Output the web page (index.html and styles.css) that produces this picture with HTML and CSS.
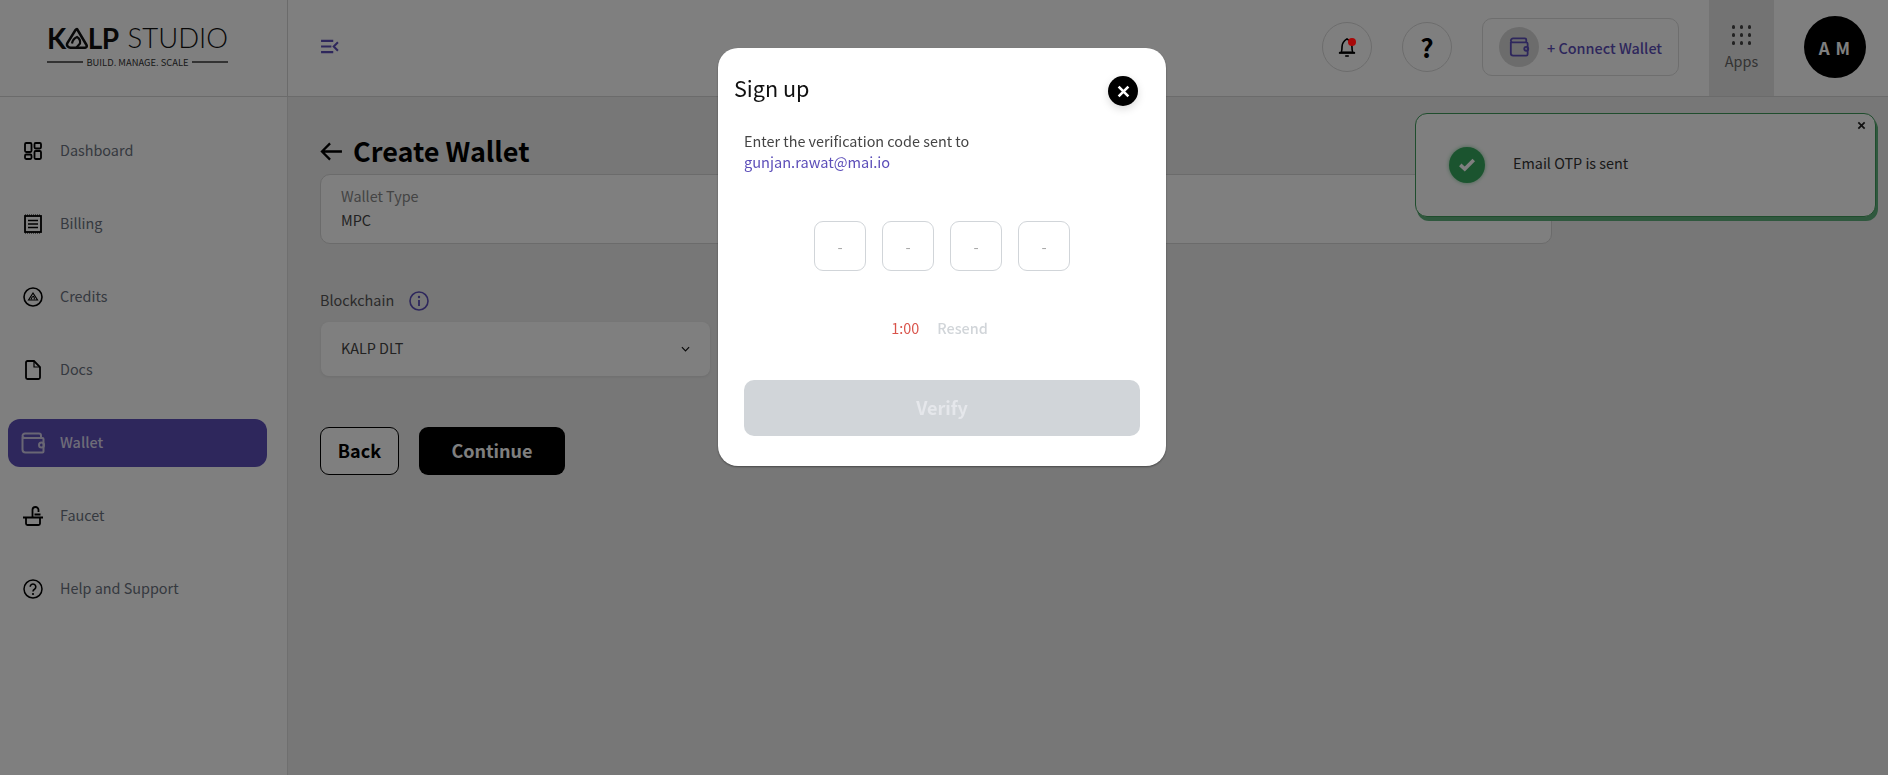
FILE: index.html
```html
<!DOCTYPE html>
<html lang="en">
<head>
<meta charset="utf-8">
<title>Kalp Studio</title>
<link rel="stylesheet" href="styles.css">
</head>
<body>
<div class="app">
  <header class="topbar">
    <div class="brand">
      <div class="logo">
        <div class="logo-word"><b>K</b><svg class="logo-a" viewBox="0 0 24 22"><path d="M12 2 21.500 18c.8 1.500-.2 2.800-2 2.800H6c-3 0-5-2.300-3.500-5L10.500 3c.6-1 1-1 1.500-1Z" fill="none" stroke="#111" stroke-width="2.500" stroke-linejoin="round"/><path d="M7 16.500c.5-3 2.500-5.500 5-6.500 2.500 1.500 3.500 4 3 6.500l-3.500 4" fill="none" stroke="#111" stroke-width="2.200"/></svg><b>LP</b><span class="logo-thin">STUDIO</span></div>
        <div class="logo-tag"><i></i><span>BUILD. MANAGE. SCALE</span><i></i></div>
      </div>
    </div>
    <div class="bar">
      <svg class="menu-ico" viewBox="0 0 20 16"><path d="M1 2h13M1 8h11M1 14h13M19 3.500 14.500 8l4.500 4.500" fill="none" stroke="#5c4eb9" stroke-width="2.200"/></svg>
      <div class="bar-right">
        <div class="round-btn"><svg class="bell" viewBox="0 0 20 24"><path d="M3.500 18c1-1.500 1-3 1-6.500C4.500 7.500 7 5 10 3c3 2 5.500 4.500 5.500 8.500 0 3.500 0 5 1 6.500Z" fill="none" stroke="#000" stroke-width="1.800"/><path d="M1 18.500h18" stroke="#000" stroke-width="2.200"/><path d="M8 22h4" stroke="#000" stroke-width="1.800"/></svg><i class="dot"></i></div>
        <div class="round-btn help">?</div>
        <div class="connect">
          <span class="connect-ico"><svg class="wallet-ico" viewBox="0 0 24 22"><path d="M3 5.500V18a2.500 2.500 0 0 0 2.500 2.500H20a1.500 1.500 0 0 0 1.500-1.500V7.500A1.500 1.500 0 0 0 20 6H5A2.200 2.200 0 0 1 3 4a2.500 2.500 0 0 1 2.500-2.500H18.500A1.500 1.500 0 0 1 20 3v3" fill="none" stroke="#5c4eb9" stroke-width="2"/><circle cx="20" cy="13" r="2.200" fill="none" stroke="#5c4eb9" stroke-width="2"/></svg></span>
          <span>+ Connect Wallet</span>
        </div>
        <div class="apps">
          <div class="dots"><i></i><i></i><i></i><i></i><i></i><i></i><i></i><i></i><i></i></div>
          <span>Apps</span>
        </div>
        <div class="avatar">A M</div>
      </div>
    </div>
  </header>
  <div class="body">
    <nav class="side">
      <a class="nav"><svg class="ni" viewBox="-1 -1 20 20"><g fill="none" stroke="#000" stroke-width="1.800"><rect x="1" y="1" width="6.500" height="9" rx="1.200"/><rect x="10.500" y="1" width="6.500" height="5.500" rx="1.200"/><rect x="1" y="12.500" width="6.500" height="4.500" rx="1.200"/><rect x="10.500" y="9" width="6.500" height="8" rx="1.200"/></g></svg><span>Dashboard</span></a>
      <a class="nav"><svg class="ni" viewBox="-1 0 20 20"><rect x="1" y="2" width="16" height="16" fill="none" stroke="#000" stroke-width="1.800"/><path d="M4 6.500h10M4 10h10M4 13.500h10" stroke="#000" stroke-width="1.600"/><path d="M1 1h16M1 19h16" stroke="#000" stroke-dasharray="1 1"/></svg><span>Billing</span></a>
      <a class="nav"><svg class="ni" viewBox="0 0 20 20"><circle cx="10" cy="10" r="9" fill="none" stroke="#000" stroke-width="1.600"/><path d="M5.500 13 10 6l4.500 7Z" fill="none" stroke="#000" stroke-width="1.200"/><path d="M8 12.500c.6-2 1.500-3 2.500-3.200.8.800 1 2 .8 3" fill="none" stroke="#000" stroke-width="1.100"/></svg><span>Credits</span></a>
      <a class="nav"><svg class="ni" viewBox="0 0 20 20"><path d="M3 2.500v15a1.500 1.500 0 0 0 1.500 1.500h11a1.500 1.500 0 0 0 1.500-1.500V7l-6-6H4.500A1.500 1.500 0 0 0 3 2.500Z" fill="none" stroke="#000" stroke-width="1.800"/><path d="M11 1v6h6" fill="none" stroke="#000" stroke-width="1.200"/></svg><span>Docs</span></a>
      <a class="nav active"><svg class="ni wide" viewBox="0 0 24 22"><path d="M1.500 5v12.500a3 3 0 0 0 3 3h17a1 1 0 0 0 1-1V7a1 1 0 0 0-1-1H4A2.500 2.500 0 0 1 1.500 4 2.500 2.500 0 0 1 4 1.500h14A2 2 0 0 1 20 3.500V6" fill="none" stroke="#d2cde8" stroke-width="2"/><circle cx="20.500" cy="13" r="2.500" fill="none" stroke="#d2cde8" stroke-width="2"/></svg><span>Wallet</span></a>
      <a class="nav"><svg class="ni" viewBox="0 0 20 20"><path d="M0 11.500h20M3 11.500v6a1.500 1.500 0 0 0 1.500 1.500h11a1.500 1.500 0 0 0 1.500-1.500v-6M9.500 11.500V4a3 3 0 0 1 6 0v2M11.500 8.500h6" fill="none" stroke="#000" stroke-width="1.800"/></svg><span>Faucet</span></a>
      <a class="nav"><svg class="ni" viewBox="0 0 20 20"><circle cx="10" cy="10" r="9" fill="none" stroke="#000" stroke-width="1.500"/><path d="M7.200 7.800A2.800 2.800 0 1 1 11.500 10.200c-1 .6-1.500 1.100-1.500 2.200" fill="none" stroke="#000" stroke-width="1.600"/><circle cx="10" cy="15" r="1.100"/></svg><span>Help and Support</span></a>
    </nav>
    <main class="main">
      <div class="title-row">
        <svg class="back-arrow" viewBox="0 0 24 20"><path d="M23 10H2M10.500 1.500 2 10l8.500 8.500" fill="none" stroke="#000" stroke-width="2.400"/></svg>
        <h1>Create Wallet</h1>
      </div>
      <div class="type-box">
        <div class="type-label">Wallet Type</div>
        <div class="type-value">MPC</div>
      </div>
      <div class="chain-label">
        <span>Blockchain</span>
        <svg class="info" viewBox="0 0 20 20"><circle cx="10" cy="10" r="9" fill="none" stroke="#5c4eb9" stroke-width="1.600"/><path d="M10 9v6" stroke="#5c4eb9" stroke-width="1.800"/><circle cx="10" cy="6" r="1.200" fill="#5c4eb9"/></svg>
      </div>
      <div class="select">
        <span>KALP DLT</span>
        <svg class="chev" viewBox="0 0 10 6"><path d="M1 1l4 4 4-4" fill="none" stroke="#111" stroke-width="1.300"/></svg>
      </div>
      <div class="actions">
        <button class="btn ghost">Back</button>
        <button class="btn solid">Continue</button>
      </div>
    </main>
  </div>
  <div class="toast">
    <span class="toast-ok"><svg viewBox="0 0 20 16"><path d="M2.500 8.500 7.500 13 17.500 3" fill="none" stroke="#fff" stroke-width="4"/></svg></span>
    <span class="toast-text">Email OTP is sent</span>
    <svg class="toast-x" viewBox="0 0 10 10"><path d="M1.500 1.500l7 7M8.500 1.500l-7 7" stroke="#222" stroke-width="1.900"/></svg>
  </div>
</div>
<div class="overlay">
  <section class="modal">
    <div class="modal-head">
      <h2>Sign up</h2>
      <span class="modal-x"><svg viewBox="0 0 12 12"><path d="M1.500 1.500l9 9M10.500 1.500l-9 9" stroke="#fff" stroke-width="2.400"/></svg></span>
    </div>
    <p class="sent">Enter the verification code sent to<br><span class="mail">gunjan.rawat@mai.io</span></p>
    <div class="otp"><span>-</span><span>-</span><span>-</span><span>-</span></div>
    <div class="timer"><span class="time">1:00</span><span class="resend">Resend</span></div>
    <button class="verify">Verify</button>
  </section>
</div>
</body>
</html>
```
FILE: styles.css
```css
* { box-sizing: border-box; }
html, body { margin: 0; height: 100%; overflow: hidden; }
body { font-family: "Noto Sans CJK SC", "Noto Sans", sans-serif; background: #fff; color: #111; }
svg { display: block; flex: none; }
.app { display: flex; flex-direction: column; height: 775px; }

.topbar { display: flex; height: 97px; flex: none; border-bottom: 1px solid #d6d6d6; background: #fff; }
.brand { width: 288px; flex: none; border-right: 1px solid #d6d6d6; padding: 26px 0 0 47px; }
.logo { width: 181px; }
.logo-word { display: flex; align-items: center; height: 24px; font-family: "Lato", sans-serif; font-size: 28px; line-height: 24px; color: #111; }
.logo-word b { font-weight: 700; letter-spacing: -.5px; }
.logo-a { width: 24px; height: 22px; margin: 0 -1px 0 -1px; }
.logo-thin { font-weight: 300; margin-left: 9px; font-size: 27.500px; }
.logo-tag { display: flex; align-items: center; gap: 3px; margin-top: 5px; font-size: 9.400px; line-height: 14px; color: #333; white-space: nowrap; }
.logo-tag i { flex: 1; height: 1.500px; background: #666; }

.bar { flex: 1; display: flex; align-items: center; justify-content: space-between; padding-left: 32px; }
.menu-ico { width: 19px; height: 15px; margin-bottom: 3px; }
.bar-right { display: flex; align-items: center; height: 96px; padding-bottom: 2px; }
.round-btn { position: relative; width: 50px; height: 50px; border: 1px solid #d9d9d9; border-radius: 50%; display: flex; align-items: center; justify-content: center; margin-right: 30px; }
.bell { width: 18px; height: 22px; }
.dot { position: absolute; left: 25px; top: 15px; z-index: 1; width: 8px; height: 8px; border-radius: 50%; background: #a80808; }
.help { font-weight: 700; font-size: 26px; color: #000; line-height: 1; }
.connect { width: 197px; height: 58px; margin: 0 30px 0 0; border: 1px solid #dcdcdc; border-radius: 10px; display: flex; align-items: center; gap: 8px; padding-left: 16px; font-size: 14.400px; font-weight: 500; color: #5c4eb9; white-space: nowrap; }
.connect-ico { width: 40px; height: 40px; border-radius: 50%; background: #d9d9d9; display: flex; align-items: center; justify-content: center; }
.wallet-ico { width: 22px; height: 20px; }
.apps { align-self: flex-start; width: 65px; height: 96px; background: #e6e6e6; display: flex; flex-direction: column; align-items: center; padding-top: 25px; font-size: 14.400px; line-height: 20px; color: #666; margin-right: 30px; }
.dots { display: grid; grid-template-columns: repeat(3, 3.500px); gap: 4.700px; margin-bottom: 6px; }
.dots i { width: 3.500px; height: 3.500px; border-radius: 50%; background: #444; }
.avatar { width: 62px; height: 62px; border-radius: 50%; background: #000; color: #fff; display: flex; align-items: center; justify-content: center; font-weight: 700; font-size: 17px; letter-spacing: 1px; margin-right: 22px; }

.body { flex: 1; display: flex; min-height: 0; }
.side { width: 288px; flex: none; border-right: 1px solid #dedede; padding: 30px 20px 0 8px; display: flex; flex-direction: column; gap: 25px; background: #fff; }
.nav { height: 48px; display: flex; align-items: center; gap: 17px; padding-left: 15px; font-size: 14.400px; color: #6b7280; border-radius: 12px; white-space: nowrap; }
.nav span { padding-bottom: 3px; }
.ni { width: 20px; height: 20px; margin-bottom: 1px; }
.ni.wide { width: 24px; height: 22px; margin: 0 -2px 1px -2px; }
.active { background: #5c4eb9; color: #dcd8f0; font-weight: 500; }

.main { flex: 1; background: #eeeeee; padding: 30px 0 0 32px; }
.title-row { display: flex; align-items: center; height: 47px; gap: 10px; }
.back-arrow { width: 23px; height: 19px; margin-top: 2px; }
h1 { margin: 0; font-size: 27px; font-weight: 700; color: #000; line-height: 47px; }
.type-box { width: 1232px; height: 70px; border: 1px solid #d6d6d6; border-radius: 10px; background: #fff; padding: 9px 20px 0; font-size: 14.400px; line-height: 24px; }
.type-label { color: #888; }
.type-value { color: #444; }
.chain-label { display: flex; align-items: center; gap: 15px; margin-top: 42px; height: 28px; font-size: 14.400px; color: #555; }
.chain-label span { padding-bottom: 2px; }
.info { width: 20px; height: 20px; margin-top: 2px; }
.select { width: 389px; height: 54px; margin: 8px 0 0 1px; background: #fff; border-radius: 8px; box-shadow: 0 1px 3px rgba(0,0,0,.08); display: flex; align-items: center; justify-content: space-between; padding: 0 20px; font-size: 14.400px; color: #444; }
.select span { padding-bottom: 3px; }
.chev { width: 9px; height: 6px; }
.actions { display: flex; gap: 20px; margin-top: 51px; }
.btn { height: 48px; border-radius: 9px; font-family: inherit; font-size: 18px; font-weight: 700; padding: 0 0 2px; }
.ghost { width: 79px; background: #fff; border: 1px solid #000; color: #000; }
.solid { width: 146px; background: #000; border: 0; color: #fff; }

.toast { position: absolute; left: 1415px; top: 113px; width: 461px; height: 104px; background: #fff; border: 1px solid #3f9a5a; border-radius: 12px; box-shadow: 2px 4px 0 #5fb07c; display: flex; align-items: center; padding: 0 0 5px 33px; }
.toast-ok { width: 36px; height: 36px; border-radius: 50%; background: #37a85e; box-shadow: 0 0 4px rgba(55,168,94,.6); display: flex; align-items: center; justify-content: center; margin: 4px 28px 0 0; }
.toast-ok svg { width: 18px; height: 15px; }
.toast-text { font-size: 14.400px; color: #333; }
.toast-x { position: absolute; right: 9px; top: 7px; width: 9px; height: 9px; }

.overlay { position: fixed; inset: 0; background: rgba(0,0,0,.5); display: flex; justify-content: center; align-items: flex-start; padding: 48px 4px 0 0; }
.modal { width: 448px; height: 418px; background: #fff; border-radius: 20px; padding: 0 26px; box-shadow: 0 1px 2px rgba(0,0,0,.4); }
.modal-head { display: flex; justify-content: space-between; height: 82px; padding: 20px 2px 0 0; margin-left: -10px; }
h2 { margin: 0; font-size: 21.600px; font-weight: 400; line-height: 40px; color: #111; }
.modal-x { width: 30px; height: 30px; margin-top: 8px; border-radius: 50%; background: #000; display: flex; align-items: center; justify-content: center; box-shadow: 0 3px 8px rgba(0,0,0,.15); }
.modal-x svg { width: 13px; height: 13px; }
.sent { margin: 0; font-size: 14.400px; line-height: 21px; color: #444; }
.mail { color: #5c4eb9; font-size: 14.600px; }
.otp { display: flex; justify-content: center; gap: 16px; margin-top: 49px; }
.otp span { width: 52px; height: 50px; border: 1px solid #d1d5d9; border-radius: 9px; display: flex; align-items: center; justify-content: center; color: #aaa; font-size: 15px; }
.timer { display: flex; justify-content: center; gap: 18px; margin-top: 45px; padding-right: 5px; font-size: 14.400px; line-height: 24px; }
.time { color: #d9534a; }
.resend { color: #d1d5d9; font-weight: 500; }
.verify { display: block; width: 396px; height: 56px; margin-top: 40px; padding: 0 0 2px; background: #d1d5d9; border: 0; border-radius: 10px; font-family: inherit; font-size: 18px; font-weight: 700; color: #e5e7eb; }
```
